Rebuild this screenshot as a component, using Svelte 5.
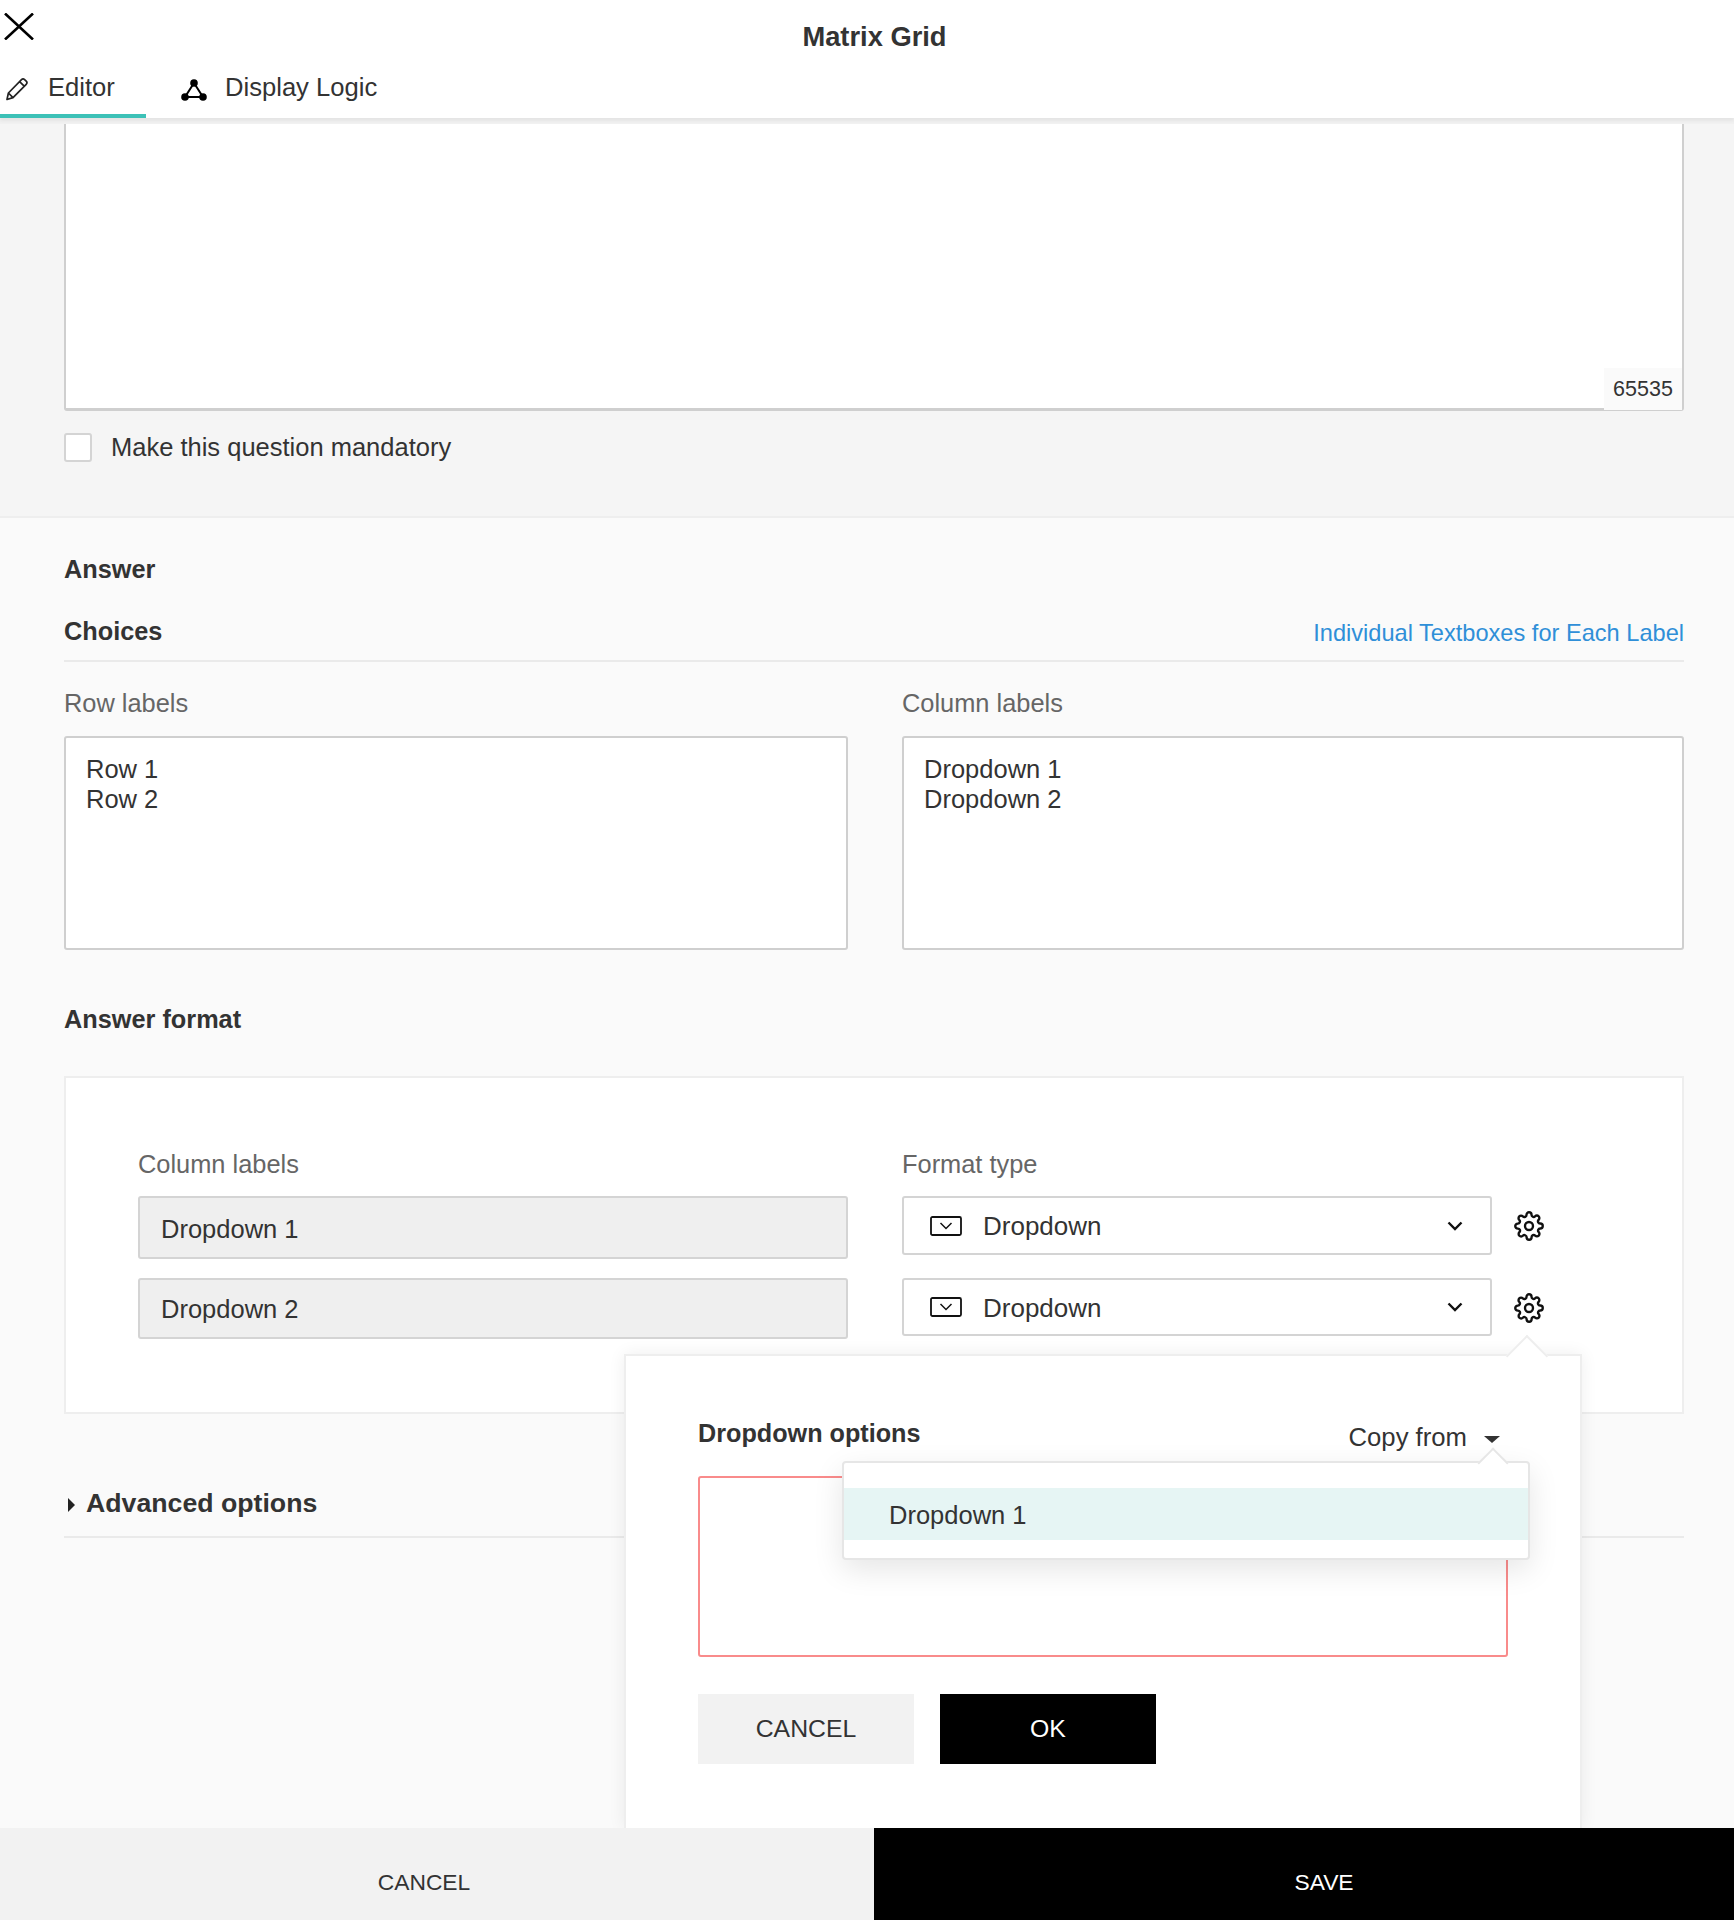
<script>
  const formats = [
    { label: 'Dropdown 1', tall: true },
    { label: 'Dropdown 2', tall: false }
  ];
</script>

<div class="page">
  <header class="top">
    <div class="title-row">
      <button class="close" aria-label="Close">
        <svg viewBox="0 0 30 27" width="30" height="27"><path d="M1 .5 29 26.5M29 .5 1 26.5" fill="none" stroke="#000" stroke-width="2.6"/></svg>
      </button>
      <h1>Matrix Grid</h1>
    </div>
    <nav class="tabs">
      <div class="tab active">
        <svg viewBox="0 0 24 24" width="24" height="24" class="pencil"><path d="M2 22.5 3.4 16 16.5 2.6a2.2 2.2 0 0 1 3.1 0l1.6 1.6a2.2 2.2 0 0 1 0 3.1L8 20.6zM3.4 16 8 20.6M14.6 4.6l4.6 4.6" fill="none" stroke="#222" stroke-width="1.7" stroke-linejoin="round"/></svg>
        <span>Editor</span>
      </div>
      <div class="tab second">
        <svg viewBox="0 0 26 22" width="26" height="22" class="tri"><path d="M13 4 4 18h18z" fill="none" stroke="#000" stroke-width="2"/><circle cx="13" cy="4" r="3.8"/><circle cx="4" cy="18" r="3.8"/><circle cx="22" cy="18" r="3.8"/></svg>
        <span>Display Logic</span>
      </div>
    </nav>
  </header>

  <main class="content">
    <section class="question">
      <div class="editor"><div class="count">65535</div></div>
      <label class="mandatory"><span class="check"></span><span class="mand-text">Make this question mandatory</span></label>
    </section>

    <section class="answer">
      <h2 class="answer-title">Answer</h2>
      <div class="choices-head">
        <h2>Choices</h2>
        <a href="#top">Individual Textboxes for Each Label</a>
      </div>
      <div class="two">
        <div>
          <div class="label">Row labels</div>
          <div class="area">Row 1<br />Row 2</div>
        </div>
        <div>
          <div class="label">Column labels</div>
          <div class="area">Dropdown 1<br />Dropdown 2</div>
        </div>
      </div>

      <h2 class="format-title">Answer format</h2>
      <div class="format-box">
        <div class="format-grid">
          <div class="label">Column labels</div>
          <div class="label">Format type</div>
          {#each formats as f}
            <div class="readonly" class:tall={f.tall}>{f.label}</div>
            <div class="format-right">
              <div class="select" class:tall={f.tall}>
                <svg viewBox="0 0 32 20" width="32" height="20" class="ddicon"><rect x="1" y="1" width="30" height="18" rx="1.5" fill="none" stroke="#111" stroke-width="1.8"/><path d="M10.5 7l5.5 5.5L21.500 7" fill="none" stroke="#111" stroke-width="1.5"/></svg>
                <span class="select-text">Dropdown</span>
                <svg viewBox="0 0 16 10" width="16" height="10" class="chev"><path d="M1.5 1.500 8 8l6.500-6.500" fill="none" stroke="#111" stroke-width="2.4"/></svg>
              </div>
              <svg viewBox="0 0 24 24" width="30" height="30" class="gear"><circle cx="12" cy="12" r="3.2" fill="none" stroke="#111" stroke-width="1.9"/><path fill="none" stroke="#111" stroke-width="1.9" d="M19.4 15a1.65 1.65 0 0 0 .33 1.82l.06.06a2 2 0 0 1 0 2.83 2 2 0 0 1-2.83 0l-.06-.06a1.65 1.65 0 0 0-1.82-.33 1.65 1.65 0 0 0-1 1.51V21a2 2 0 0 1-2 2 2 2 0 0 1-2-2v-.09A1.65 1.65 0 0 0 9 19.4a1.65 1.65 0 0 0-1.82.33l-.06.06a2 2 0 0 1-2.83 0 2 2 0 0 1 0-2.83l.06-.06a1.65 1.65 0 0 0 .33-1.82 1.65 1.65 0 0 0-1.51-1H3a2 2 0 0 1-2-2 2 2 0 0 1 2-2h.09A1.65 1.65 0 0 0 4.6 9a1.65 1.65 0 0 0-.33-1.82l-.06-.06a2 2 0 0 1 0-2.83 2 2 0 0 1 2.83 0l.06.06a1.65 1.65 0 0 0 1.82.33H9a1.65 1.65 0 0 0 1-1.51V3a2 2 0 0 1 2-2 2 2 0 0 1 2 2v.09a1.65 1.65 0 0 0 1 1.51 1.65 1.65 0 0 0 1.82-.33l.06-.06a2 2 0 0 1 2.83 0 2 2 0 0 1 0 2.83l-.06.06a1.65 1.65 0 0 0-.33 1.82V9a1.65 1.65 0 0 0 1.51 1H21a2 2 0 0 1 2 2 2 2 0 0 1-2 2h-.09a1.65 1.65 0 0 0-1.51 1z"/></svg>
            </div>
          {/each}
        </div>
      </div>

      <div class="advanced"><i class="tri-right"></i><span>Advanced options</span></div>
    </section>
  </main>

  <footer class="bottom">
    <button class="foot cancel">CANCEL</button>
    <button class="foot save">SAVE</button>
  </footer>

  <div class="popup">
    <i class="arrow"></i>
    <div class="popup-head">
      <strong>Dropdown options</strong>
      <span class="copy">Copy from <i class="caret"></i></span>
    </div>
    <div class="red"></div>
    <div class="popup-actions">
      <button class="pbtn light">CANCEL</button>
      <button class="pbtn dark">OK</button>
    </div>
    <div class="menu">
      <i class="menu-arrow"></i>
      <div class="menu-item">Dropdown 1</div>
    </div>
  </div>
</div>

<style>
  :global(body) { margin: 0; }
  .page {
    position: relative;
    width: 1734px;
    height: 1920px;
    overflow: hidden;
    display: grid;
    grid-template-rows: 118px 1fr 92px;
    font-family: "Liberation Sans", Arial, sans-serif;
    font-size: 25.5px;
    color: #333;
    background: #fafafa;
  }
  .top {
    position: relative;
    z-index: 3;
    background: #fff;
    box-shadow: 0 3px 3px rgba(0,0,0,.05), 0 6px 0 #f1f1f1;
  }
  .title-row { position: relative; height: 66px; text-align: center; }
  h1 { margin: 0; padding: 20px 0 0 15px; font-size: 27.3px; line-height: 34px; font-weight: 700; color: #333; }
  .close { position: absolute; left: 4px; top: 13px; padding: 0; border: 0; background: none; line-height: 0; }
  .tabs { display: flex; height: 52px; }
  .tab { display: flex; align-items: center; height: 52px; box-sizing: border-box; padding-bottom: 6px; border-bottom: 4px solid transparent; font-size: 25.6px; }
  .tab.active { width: 146px; padding-left: 5px; border-bottom-color: #3cc1b7; gap: 19px; }
  .tab.second { margin-left: 35px; gap: 18px; }
  .tri { margin-top: 6px; }
  .pencil { margin-top: 3px; }

  .content { min-height: 0; overflow: hidden; display: flex; flex-direction: column; }
  .question { height: 400px; box-sizing: border-box; background: #f5f5f5; padding: 0 50px 0 64px; border-bottom: 2px solid #eee; flex: none; }
  .editor {
    position: relative;
    height: 293px;
    box-sizing: border-box;
    background: #fff;
    border: 2px solid #cfcfcf;
    border-top: 0;
    border-bottom-width: 3px;
    border-radius: 0 0 3px 3px;
  }
  .count {
    position: absolute;
    right: 0; bottom: -2px;
    width: 78px; height: 42px;
    box-sizing: border-box;
    background: #fafafa;
    font-size: 21.5px;
    line-height: 42px;
    text-align: center;
  }
  .mandatory { display: flex; align-items: center; gap: 19px; margin-top: 21px; }
  .mand-text { padding-top: 1px; }
  .check { width: 28px; height: 29px; box-sizing: border-box; background: #fff; border: 2px solid #d4d4d4; border-radius: 3px; }

  .answer { flex: 1; padding: 0 50px 0 64px; background: #fafafa; }
  h2 { margin: 0; font-size: 25.3px; line-height: 34px; font-weight: 700; color: #333; }
  .answer-title { margin-top: 34px; }
  .choices-head { display: flex; justify-content: space-between; align-items: center; margin-top: 28px; padding-bottom: 12px; border-bottom: 2px solid #eaeaea; }
  .choices-head a { color: #2f8fd8; text-decoration: none; font-size: 23.6px; position: relative; top: 2px; }
  .two { display: grid; grid-template-columns: 784px 782px; column-gap: 54px; margin-top: 25px; }
  .label { font-size: 25.4px; line-height: 32px; color: #666; }
  .area {
    height: 214px;
    margin-top: 17px;
    box-sizing: border-box;
    background: #fff;
    border: 2px solid #cfcfcf;
    border-radius: 3px;
    padding: 16px 20px;
    line-height: 30px;
  }
  .format-title { margin-top: 52px; }
  .format-box {
    height: 338px;
    box-sizing: border-box;
    margin-top: 40px;
    background: #fff;
    border: 2px solid #eee;
    padding: 70px 0 0 72px;
  }
  .format-grid { display: grid; grid-template-columns: 710px 660px; column-gap: 54px; align-items: start; }
  .format-grid .label { margin-bottom: 16px; }
  .readonly {
    height: 61px;
    margin-bottom: 19px;
    box-sizing: border-box;
    background: #efefef;
    border: 2px solid #d4d4d4;
    border-radius: 3px;
    padding: 1px 0 0 21px;
    display: flex;
    align-items: center;
  }
  .readonly.tall { height: 63px; padding-top: 3px; }
  .format-right { display: flex; align-items: flex-start; gap: 22px; }
  .select {
    flex: none;
    width: 590px;
    height: 58px;
    box-sizing: border-box;
    background: #fff;
    border: 2px solid #d4d4d4;
    border-radius: 3px;
    padding: 0 27px 0 26px;
    display: flex;
    align-items: center;
    font-size: 26px;
  }
  .select.tall { height: 59px; }
  .select-text { padding-top: 2px; }
  .ddicon { margin-right: 21px; }
  .chev { margin-left: auto; }
  .gear { flex: none; margin-top: 15px; }
  .advanced { display: flex; align-items: center; margin-top: 72px; padding-bottom: 16px; border-bottom: 2px solid #eaeaea; font-weight: 700; font-size: 26.7px; line-height: 34px; }
  .tri-right { width: 0; height: 0; border-left: 7px solid #222; border-top: 7px solid transparent; border-bottom: 7px solid transparent; margin: 3px 11px 0 4px; }

  .bottom { display: grid; grid-template-columns: 874px 860px; position: relative; z-index: 4; }
  .foot { border: 0; font: inherit; font-size: 22.8px; padding: 16px 0 0; }
  .foot.cancel { background: #f2f2f2; color: #333; padding-right: 26px; }
  .foot.save { background: #000; color: #fff; padding-left: 40px; }

  .popup {
    position: absolute;
    z-index: 2;
    left: 624px;
    top: 1354px;
    width: 958px;
    height: 474px;
    box-sizing: border-box;
    background: #fff;
    border: 2px solid #eee;
    border-bottom: 0;
    padding: 59px 72px 0 72px;
    box-shadow: 0 0 16px rgba(0,0,0,.07);
  }
  .arrow {
    position: absolute;
    left: 886px; top: -15px;
    width: 28px; height: 28px;
    background: #fff;
    border-left: 2px solid #eee;
    border-top: 2px solid #eee;
    transform: rotate(45deg);
  }
  .popup-head { display: flex; justify-content: space-between; align-items: flex-start; height: 61px; }
  .popup-head strong { font-size: 25.2px; line-height: 36px; color: #333; }
  .copy { display: inline-flex; align-items: center; line-height: 36px; margin-top: 4px; margin-right: 8px; font-size: 25.7px; }
  .caret { width: 0; height: 0; border-top: 7px solid #333; border-left: 8px solid transparent; border-right: 8px solid transparent; margin-left: 17px; margin-top: 4px; }
  .red { width: 810px; height: 181px; box-sizing: border-box; border: 2px solid #f98b8b; border-radius: 3px; background: #fff; }
  .popup-actions { display: flex; gap: 26px; margin-top: 37px; }
  .pbtn { width: 216px; height: 70px; border: 0; font: inherit; font-size: 24.8px; padding: 0; }
  .pbtn.light { background: #f2f2f2; color: #333; }
  .pbtn.dark { background: #000; color: #fff; }
  .menu {
    position: absolute;
    left: 216px; top: 105px;
    width: 688px; height: 99px;
    box-sizing: border-box;
    padding-top: 25px;
    background: #fff;
    border: 2px solid #e6e6e6;
    border-radius: 4px;
    box-shadow: 0 10px 30px rgba(0,0,0,.1);
  }
  .menu-arrow {
    position: absolute;
    left: 638px; top: -11px;
    width: 20px; height: 20px;
    background: #fff;
    border-left: 2px solid #e6e6e6;
    border-top: 2px solid #e6e6e6;
    transform: rotate(45deg);
  }
  .menu-item { height: 52px; background: #e6f5f4; line-height: 54px; padding-left: 45px; }
</style>
